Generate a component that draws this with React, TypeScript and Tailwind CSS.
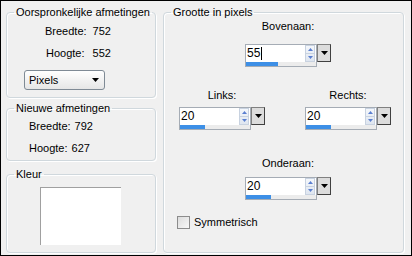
import React from 'react';

function GroupBox({ title, className, children }: { title: string; className?: string; children?: React.ReactNode }) {
  return (
    <fieldset className={`border border-[#d0d8dd] rounded-[4px] shadow-[inset_1px_1px_0_#ffffff,1px_1px_0_#ffffff] ${className ?? ''}`}>
      <legend className="ml-[7px] px-[2px] leading-[13px] whitespace-nowrap">{title}</legend>
      {children}
    </fieldset>
  );
}

function SpinBox({ value, fill }: { value: string; fill: number }) {
  return (
    <div className="flex items-start">
      <div className="w-[72px] h-[23px] border border-[#a5acb5] bg-white flex flex-col">
        <div className="flex h-[17px]">
          <div className="flex-1 pl-[1px] leading-[17px] text-[12px] flex items-center">
            {value}
            {value === '55' && <span className="w-[1px] h-[13px] bg-black ml-[1px]" />}
          </div>
          <div className="w-[10px] mr-[1px] flex flex-col border border-[#c8d2e0] bg-gradient-to-b from-[#f4f7fb] to-[#dfe6f0]">
            <div className="flex-1 flex items-center justify-center border-b border-[#c8d2e0]">
              <svg width="5" height="3" viewBox="0 0 5 3"><path d="M2.5 0 L5 3 L0 3 Z" fill="#5a7fd0" /></svg>
            </div>
            <div className="flex-1 flex items-center justify-center">
              <svg width="5" height="3" viewBox="0 0 5 3"><path d="M0 0 L5 0 L2.5 3 Z" fill="#5a7fd0" /></svg>
            </div>
          </div>
        </div>
        <div className="h-[4px] bg-[#ececec] flex">
          <div className="h-full bg-[#3d8fe6]" style={{ width: fill }} />
        </div>
      </div>
      <div className="w-[14px] h-[18px] border border-[#404040] border-l-[#808080] border-t-[#808080] bg-[#dcdcdc] flex items-center justify-center">
        <svg width="7" height="4" viewBox="0 0 7 4"><path d="M0 0 L7 0 L3.5 4 Z" fill="#000" /></svg>
      </div>
    </div>
  );
}

export default function App() {
  return (
    <div className="w-[412px] h-[256px] border border-black bg-[#f0f0f0] text-black text-[11px] font-['Liberation_Sans',Arial,sans-serif] flex pl-[5px] pt-[5px] overflow-hidden">
      <div className="w-[150px] flex flex-col">
        <GroupBox title="Oorspronkelijke afmetingen" className="h-[92px]">
          <div className="pl-[38px]">
            <div className="mt-[6px] flex gap-[6px] leading-[13px]"><span>Breedte:</span><span>752</span></div>
            <div className="mt-[9px] flex gap-[8px] leading-[13px] pl-[1px]"><span>Hoogte:</span><span>552</span></div>
          </div>
          <div className="mt-[10px] ml-[17px] w-[81px] h-[20px] border border-[#7f8a95] rounded-[3px] bg-gradient-to-b from-white to-[#e6e6e6] flex items-center justify-between pl-[4px] pr-[5px]">
            <span>Pixels</span>
            <svg width="7" height="4" viewBox="0 0 7 4"><path d="M0 0 L7 0 L3.5 4 Z" fill="#000" /></svg>
          </div>
        </GroupBox>
        <GroupBox title="Nieuwe afmetingen" className="mt-[4px] h-[59px]">
          <div className="pl-[22px]">
            <div className="mt-[5px] flex gap-[4px] leading-[13px]"><span>Breedte:</span><span>792</span></div>
            <div className="mt-[9px] flex gap-[4px] leading-[13px]"><span>Hoogte:</span><span>627</span></div>
          </div>
        </GroupBox>
        <GroupBox title="Kleur" className="mt-[7px] h-[85px]">
          <div className="mt-[6px] ml-[33px] w-[81px] h-[58px] bg-white border-l border-t border-[#a0a0a0]" />
        </GroupBox>
      </div>
      <GroupBox title="Grootte in pixels" className="ml-[7px] w-[241px] h-[247px]">
        <div className="ml-[81px] mt-[1px] w-[86px] flex flex-col items-center">
          <span className="leading-[13px]">Bovenaan:</span>
          <div className="mt-[11px]"><SpinBox value="55" fill={32} /></div>
        </div>
        <div className="mt-[22px] flex pl-[15px]">
          <div className="w-[86px] flex flex-col items-center">
            <span className="leading-[13px]">Links:</span>
            <div className="mt-[5px]"><SpinBox value="20" fill={25} /></div>
          </div>
          <div className="ml-[40px] w-[86px] flex flex-col items-center">
            <span className="leading-[13px]">Rechts:</span>
            <div className="mt-[5px]"><SpinBox value="20" fill={25} /></div>
          </div>
        </div>
        <div className="ml-[81px] mt-[27px] w-[86px] flex flex-col items-center">
          <span className="leading-[13px]">Onderaan:</span>
          <div className="mt-[7px]"><SpinBox value="20" fill={25} /></div>
        </div>
        <div className="mt-[16px] ml-[13px] flex items-center gap-[4px]">
          <div className="w-[13px] h-[13px] border border-[#8c8c8c] bg-gradient-to-br from-[#dcdcdc] to-[#f8f8f8]" />
          <span className="leading-[13px]">Symmetrisch</span>
        </div>
      </GroupBox>
    </div>
  );
}
